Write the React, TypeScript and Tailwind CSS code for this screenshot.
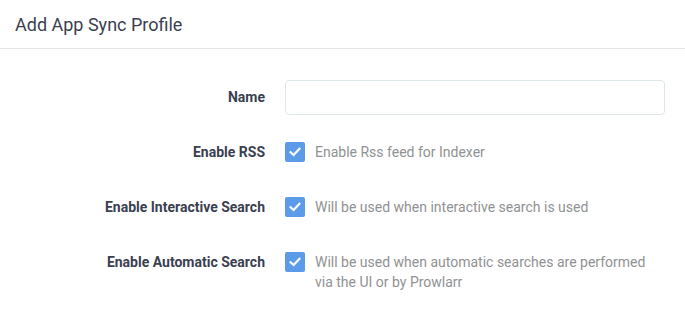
import React from "react";

function Check() {
  return (
    <div className="w-5 h-5 rounded-[2px] bg-[#5b9be8] flex items-center justify-center shrink-0">
      <svg width="12" height="10" viewBox="0 0 12 10" fill="none">
        <path d="M1.5 5.2 L4.6 8 L10.5 1.8" stroke="white" strokeWidth="2.2" strokeLinecap="square" />
      </svg>
    </div>
  );
}

function Row({ label, children }: { label: string; children: React.ReactNode }) {
  return (
    <div className="flex items-start mb-5">
      <div className="w-[250px] shrink-0 mr-5 text-right font-bold leading-[35px] text-[14px] text-[#3a3f51]">{label}</div>
      <div className="flex-1">{children}</div>
    </div>
  );
}

function CheckRow({ label, help }: { label: string; help: string }) {
  return (
    <Row label={label}>
      <div className="flex items-start pt-[7px]">
        <Check />
        <div className="ml-[10px] text-[14px] leading-[20px] text-[#909293]">{help}</div>
      </div>
    </Row>
  );
}

export default function App() {
  return (
    <div className="w-[685px] h-[318px] bg-white overflow-hidden" style={{ fontFamily: "Roboto, 'Noto Sans', sans-serif" }}>
      <div className="h-[49px] border-b border-[#e5e5e5] pl-[15px] flex items-center text-[18px] text-[#3a3f51]">
        Add App Sync Profile
      </div>
      <div className="pl-[15px] pr-[20px] pt-[31px]">
        <Row label="Name">
          <div className="h-[35px] border border-[#dde6e9] rounded-[4px]" />
        </Row>
        <CheckRow label="Enable RSS" help="Enable Rss feed for Indexer" />
        <CheckRow label="Enable Interactive Search" help="Will be used when interactive search is used" />
        <CheckRow label="Enable Automatic Search" help="Will be used when automatic searches are performed via the UI or by Prowlarr" />
      </div>
    </div>
  );
}
